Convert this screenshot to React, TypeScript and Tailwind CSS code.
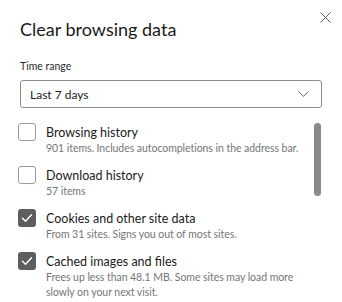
import React from "react";

type Item = { title: string; desc: string[]; checked: boolean };

const items: Item[] = [
  { title: "Browsing history", desc: ["901 items. Includes autocompletions in the address bar."], checked: false },
  { title: "Download history", desc: ["57 items"], checked: false },
  { title: "Cookies and other site data", desc: ["From 31 sites. Signs you out of most sites."], checked: true },
  {
    title: "Cached images and files",
    desc: ["Frees up less than 48.1 MB. Some sites may load more", "slowly on your next visit."],
    checked: true,
  },
];

function Checkbox({ checked }: { checked: boolean }) {
  if (checked) {
    return (
      <div className="w-[18px] h-[18px] shrink-0 rounded-[3px] bg-[#5e5e5e] flex items-center justify-center">
        <svg width="18" height="18" viewBox="0 0 18 18" fill="none">
          <path d="M4.5 9.3 L7.5 12.2 L13.5 5.8" stroke="#ffffff" strokeWidth="1.4" strokeLinecap="round" strokeLinejoin="round" />
        </svg>
      </div>
    );
  }
  return <div className="w-[18px] h-[18px] shrink-0 rounded-[3px] border border-[#9a9a9a] bg-white" />;
}

export default function App() {
  return (
    <div
      className="w-[342px] h-[302px] bg-white overflow-hidden text-[#1b1b1b]"
      style={{ fontFamily: "Lato, 'Noto Sans', sans-serif" }}
    >
      <div className="flex justify-between items-start pl-[20px] pr-[11px]">
        <h1 className="pt-[17px] text-[18px] leading-[24px] font-normal text-[#1a1a1a]">Clear browsing data</h1>
        <button className="mt-[12px] w-[11px] h-[11px] flex items-center justify-center">
          <svg width="11" height="11" viewBox="0 0 11 11" fill="none">
            <path d="M0.5 0.5 L10.5 10.5 M10.5 0.5 L0.5 10.5" stroke="#555555" strokeWidth="1" />
          </svg>
        </button>
      </div>

      <div className="px-[20px]">
        <div className="mt-[17px] text-[10.5px] leading-[16px] text-[#2b2b2b]">Time range</div>
        <div className="mt-[6px] h-[28px] border border-[#8d8d8d] rounded-[3px] flex items-center justify-between pl-[9px] pr-[12px]">
          <span className="text-[12px] leading-[26px] pt-[1px] text-[#1b1b1b]">Last 7 days</span>
          <svg width="11" height="6" viewBox="0 0 11 6" fill="none">
            <path d="M0.5 0.5 L5.5 5.3 L10.5 0.5" stroke="#555555" strokeWidth="0.9" />
          </svg>
        </div>
      </div>

      <div className="mt-[15px] flex pl-[18px] pr-[20px]">
        <div className="flex-1 flex flex-col gap-[10px]">
          {items.map((it) => (
            <div key={it.title} className="flex items-start gap-[10px]">
              <Checkbox checked={it.checked} />
              <div className="pt-[1px]">
                <div className="text-[12.5px] leading-[17px] text-[#1b1b1b]">{it.title}</div>
                {it.desc.map((d) => (
                  <div key={d} className="text-[10.5px] leading-[15px] tracking-[-0.05px] text-[#767676]">
                    {d}
                  </div>
                ))}
              </div>
            </div>
          ))}
        </div>
        <div className="w-[8px] shrink-0">
          <div className="h-[73px] w-[7px] rounded-full bg-[#8a8a8a]" />
        </div>
      </div>
    </div>
  );
}
